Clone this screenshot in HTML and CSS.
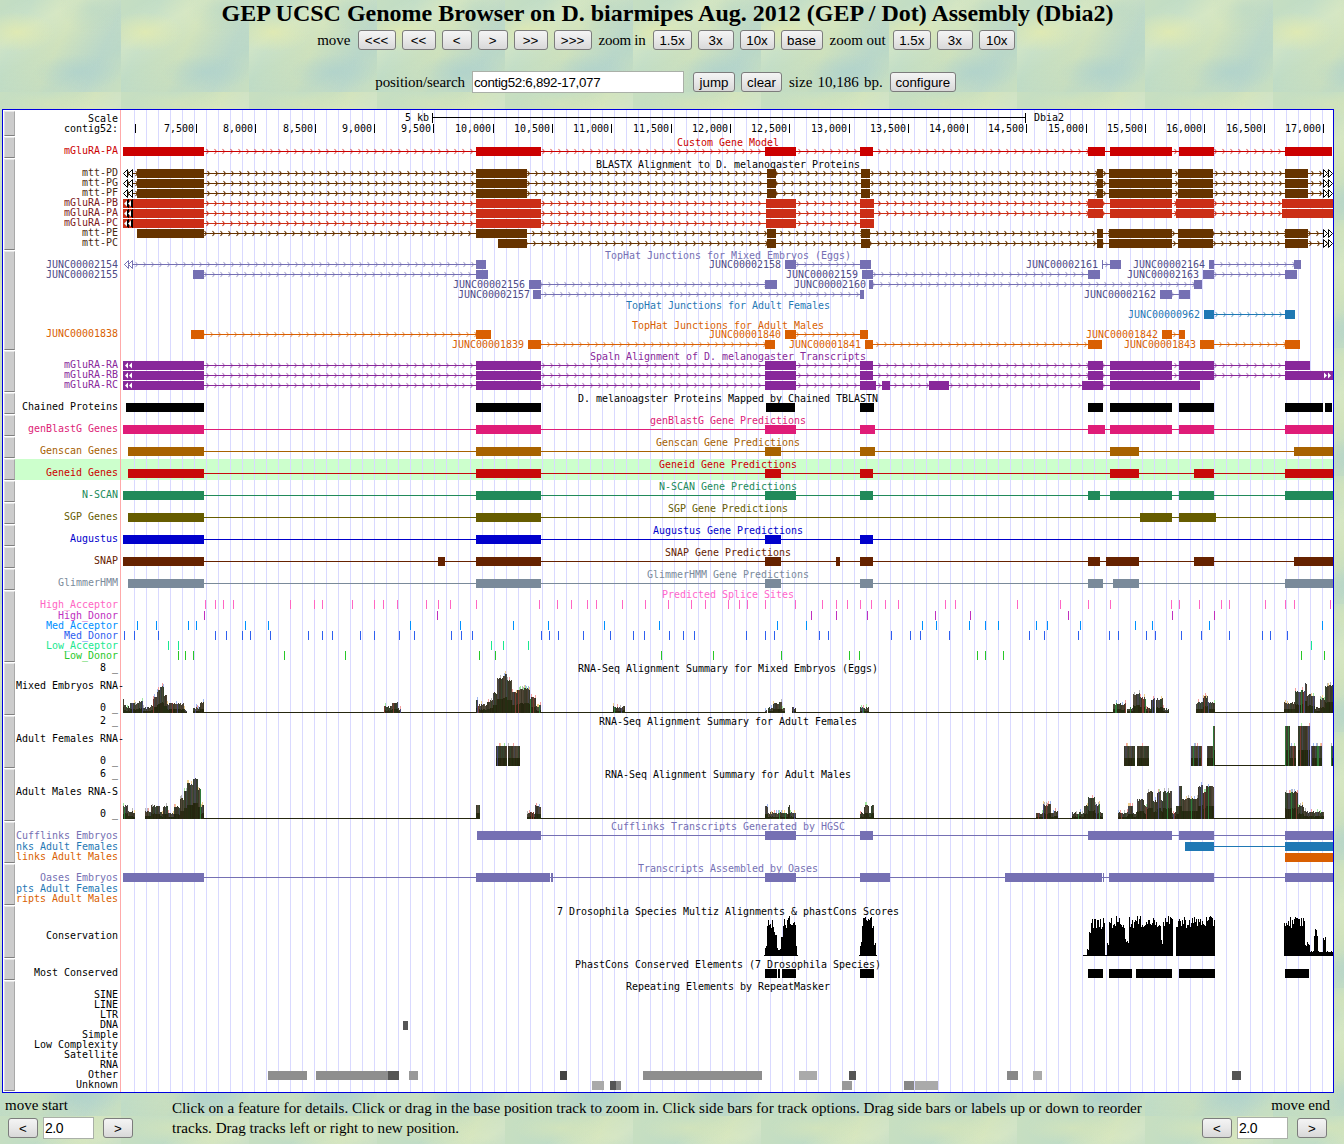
FILE: index.html
```html
<!DOCTYPE html>
<html lang="en">
<head>
<meta charset="utf-8">
<title>GEP UCSC Genome Browser</title>
<link rel="stylesheet" href="styles.css">
</head>
<body>
<div class="page">
  <h1 class="title">GEP UCSC Genome Browser on D. biarmipes Aug. 2012 (GEP / Dot) Assembly (Dbia2)</h1>
  <div class="nav nav-move">
    <span class="word">move</span>
    <button class="btn w38">&lt;&lt;&lt;</button>
    <button class="btn w34">&lt;&lt;</button>
    <button class="btn w30">&lt;</button>
    <button class="btn w30">&gt;</button>
    <button class="btn w34">&gt;&gt;</button>
    <button class="btn w38">&gt;&gt;&gt;</button>
    <span class="word word-tight">zoom in</span>
    <button class="btn w39">1.5x</button>
    <button class="btn w36">3x</button>
    <button class="btn w35">10x</button>
    <button class="btn w42">base</button>
    <span class="word">zoom out</span>
    <button class="btn w38">1.5x</button>
    <button class="btn w36">3x</button>
    <button class="btn w36">10x</button>
  </div>
  <div class="nav nav-pos">
    <span class="word word-pos">position/search</span>
    <input class="field field-pos" value="contig52:6,892-17,077">
    <button class="btn w42 after-field">jump</button>
    <button class="btn w41">clear</button>
    <span class="word word-size">size 10,186 bp.</span>
    <button class="btn w66">configure</button>
  </div>
  <div class="browser">
    <div class="sidebars" id="sidebars"></div>
    <svg class="tracks" id="tracks" width="1318" height="982" viewBox="15 110 1318 982" xmlns="http://www.w3.org/2000/svg"></svg>
  </div>
  <div class="foot">
    <div class="mover">
      <div class="mover-label">move start</div>
      <div class="mover-row">
        <button class="btn w30">&lt;</button>
        <input class="field field-num" value="2.0">
        <button class="btn w30 after-num">&gt;</button>
      </div>
    </div>
    <p class="help">Click on a feature for details. Click or drag in the base position track to zoom in. Click side bars for track options. Drag side bars or labels up or down to reorder tracks. Drag tracks left or right to new position.</p>
    <div class="mover mover-end">
      <div class="mover-label">move end</div>
      <div class="mover-row">
        <button class="btn w30">&lt;</button>
        <input class="field field-num" value="2.0">
        <button class="btn w30 after-num">&gt;</button>
      </div>
    </div>
  </div>
</div>
<script src="script.js"></script>
</body>
</html>
```
FILE: styles.css
```css
html, body { margin: 0; padding: 0; height: 1144px; overflow: hidden; }
body {
  background-color: #c6dfc0;
  background-image:
    radial-gradient(ellipse 38px 20px at 24px 68px, rgba(232,236,168,.65), rgba(232,236,168,0)),
    radial-gradient(ellipse 44px 18px at 85px 108px, rgba(172,208,205,.6), rgba(172,208,205,0)),
    radial-gradient(ellipse 34px 24px at 100px 45px, rgba(182,214,198,.55), rgba(182,214,198,0)),
    radial-gradient(ellipse 46px 16px at 55px 12px, rgba(222,232,180,.55), rgba(222,232,180,0)),
    linear-gradient(150deg, rgba(255,255,210,0) 25%, rgba(255,255,210,.22) 42%, rgba(255,255,210,0) 58%, rgba(165,205,205,.28) 78%, rgba(165,205,205,0) 95%),
    linear-gradient(115deg, #c8dfc0, #c0dcc6 30%, #d0e2bc 55%, #c0dac8 80%, #c8dfc0);
  background-size: 128px 128px;
  background-position: -7px -36px;
  font-family: "Liberation Serif", "Times New Roman", serif;
  font-size: 15px;
  color: #000;
}
.page { width: 1335px; }
.title {
  margin: 0;
  height: 27px;
  line-height: 27px;
  font-size: 24px;
  font-weight: bold;
  text-align: center;
}
.nav { display: flex; justify-content: center; align-items: center; gap: 6px; }
.nav-move { margin: 3px 0 0 -4px; height: 20px; }
.nav-pos { margin: 21px 0 0 -5px; height: 22px; }
.word { margin: 0 1px; white-space: nowrap; }
.word-tight { letter-spacing: -.25px; }
.word-pos { letter-spacing: -.07px; }
.word-size { word-spacing: 1.5px; }
.btn {
  box-sizing: border-box;
  height: 20px;
  padding: 0;
  border: 1px solid #7c7c7c;
  border-radius: 3px;
  background: linear-gradient(#f4f4f4, #e8e8e8 50%, #d8d8d8);
  font-family: "Liberation Sans", Arial, sans-serif;
  font-size: 13.33px;
  color: #000;
}
.w30 { width: 30px; }
.w34 { width: 34px; }
.w35 { width: 35px; }
.w36 { width: 36px; }
.w38 { width: 38px; }
.w39 { width: 39px; }
.w41 { width: 41px; }
.w42 { width: 42px; }
.w66 { width: 66px; }
.after-field { margin-left: 3px; }
.field {
  box-sizing: border-box;
  height: 22px;
  border: 1px solid #aab0a8;
  background: #fff;
  padding: 0 1px;
  font-family: "Liberation Sans", Arial, sans-serif;
  font-size: 13.33px;
  letter-spacing: -.3px;
  color: #000;
}
.field-pos { width: 212px; }
.field-num { width: 51px; font-size: 14px; letter-spacing: -.5px; }
.browser {
  box-sizing: border-box;
  display: flex;
  margin: 16px 0 0 2px;
  width: 1332px;
  height: 984px;
  border: 1px solid #0000e0;
  background: #fff;
}
.sidebars {
  box-sizing: border-box;
  display: flex;
  flex-direction: column;
  gap: 1px;
  width: 12px;
  padding: 1px 0 0 1px;
}
.sidebar {
  box-sizing: border-box;
  width: 11px;
  background: #cccccc;
  border-top: 1px solid #e8e8e8;
  border-left: 1px solid #e0e0e0;
  border-bottom: 1px solid #7f7f7f;
  border-right: 1px solid #a8a8a8;
}
.tracks { display: block; flex: none; }
.tracks text {
  font-family: "DejaVu Sans Mono", "Liberation Mono", monospace;
  font-size: 9.97px;
}
.foot { display: flex; height: 51px; }
.mover { box-sizing: border-box; width: 172px; padding: 2px 0 0 5px; }
.mover-label { height: 20px; line-height: 20px; }
.mover-row { display: flex; align-items: center; gap: 5px; margin-top: 2px; padding-left: 3px; }
.after-num { margin-left: 4px; }
.help {
  margin: 5px 0 0;
  width: 1000px;
  padding-right: 22px;
  box-sizing: border-box;
  font-size: 15.12px;
  line-height: 20px;
}
.mover-end { width: 165px; padding: 2px 0 0 0; margin-left: -7px; }
.mover-end .mover-label { text-align: right; }
.mover-end .mover-row { padding-left: 37px; }
```
FILE: script.js
```js
(function () {
  var out = [];
  var seed = 12345;
  function rnd() { seed = (seed * 1103515245 + 12345) & 0x7fffffff; return seed / 0x7fffffff; }
  function rect(x1, x2, y, h, c) {
    out.push('<rect x="' + x1 + '" y="' + y + '" width="' + (x2 - x1) + '" height="' + h + '" fill="' + c + '"/>');
  }
  function esc(s) { return s.replace(/&/g, '&amp;').replace(/</g, '&lt;'); }
  function text(s, x, yc, c, anchor, extra) {
    out.push('<text x="' + x + '" y="' + (yc + 4) + '" fill="' + c + '" text-anchor="' + (anchor || 'end') + '"' + (extra || '') + '>' + esc(s) + '</text>');
  }
  var HEAVY = { '#663300': 1, '#cb2e16': 1 };
  function intron(x1, x2, top, c) {
    rect(x1, x2, top + 4, 1, c);
    var d = '';
    for (var x = x1 + 3; x < x2 - 2; x += 8) { d += 'M' + (x + .5) + ' ' + (top + 2) + 'l2 2.5l-2 2.5'; }
    out.push('<path d="' + d + '" fill="none" stroke="' + c + '" stroke-width="1.1" opacity="' + (HEAVY[c] ? 1 : .6) + '"/>');
  }
  function blocks(list, top, c) { list.forEach(function (b) { rect(b[0], b[1], top, 9, c); }); }
  function gene(list, top, c, from, to) {
    var a = from === undefined ? list[0][0] : from;
    var b = to === undefined ? list[list.length - 1][1] : to;
    intron(a, b, top, c);
    blocks(list, top, c);
  }
  function solid(list, top, c, from, to) {
    var a = from === undefined ? list[0][0] : from;
    var b = to === undefined ? 1333 : to;
    rect(a, b, top + 4, 1, c);
    blocks(list, top, c);
  }
  function tri(x, top, dir, fill, stroke) {
    var d = dir < 0
      ? 'M' + (x + 4.5) + ' ' + (top + .5) + 'L' + (x + .5) + ' ' + (top + 4.5) + 'L' + (x + 4.5) + ' ' + (top + 8.5) + 'Z'
      : 'M' + (x + .5) + ' ' + (top + .5) + 'L' + (x + 4.5) + ' ' + (top + 4.5) + 'L' + (x + .5) + ' ' + (top + 8.5) + 'Z';
    out.push('<path d="' + d + '" fill="' + fill + '" stroke="' + stroke + '"/>');
  }
  function whiteArrows(x, top, dir) {
    [0, 4].forEach(function (o) {
      var d = dir < 0
        ? 'M' + (x + o + 3) + ' ' + (top + 1.5) + 'L' + (x + o) + ' ' + (top + 4.5) + 'L' + (x + o + 3) + ' ' + (top + 7.5) + 'Z'
        : 'M' + (x + o) + ' ' + (top + 1.5) + 'L' + (x + o + 3) + ' ' + (top + 4.5) + 'L' + (x + o) + ' ' + (top + 7.5) + 'Z';
      out.push('<path d="' + d + '" fill="#fff"/>');
    });
  }

  /* sidebars */
  var bars = [25, 21, 91, 99, 41, 21, 21, 21, 21, 21, 21, 21, 21, 21, 71, 52, 52, 52, 41, 41, 52, 21, 110];
  var sb = document.getElementById('sidebars');
  bars.forEach(function (h) {
    var d = document.createElement('div');
    d.className = 'sidebar';
    d.style.height = h + 'px';
    sb.appendChild(d);
  });

  /* highlight, guides, margin line */
  rect(15, 1333, 459, 21, '#ccffcc');
  for (var gx = 134; gx < 1333; gx += 12) { rect(gx, gx + 1, 110, 982, '#d9d9ff'); }
  rect(120, 121, 110, 982, '#ffaaaa');

  /* ruler */
  text('5 kb', 429, 117, '#000');
  rect(432, 1025, 117, 1, '#000');
  rect(432, 433, 113, 10, '#000');
  rect(1025, 1026, 113, 10, '#000');
  text('Dbia2', 1034, 117, '#000', 'start');
  rect(135, 136, 124, 9, '#000');
  for (var i = 0; i < 20; i++) {
    var n = 7500 + i * 500;
    var tx = Math.round(196 + i * 59.32);
    rect(tx, tx + 1, 124, 9, '#000');
    text(n.toString().replace(/(\d)(\d{3})$/, '$1,$2'), tx - 2, 128, '#000');
  }

  /* track titles */
  var PUR = '#7570b3', BLU = '#1f78b4', ORA = '#d95f02', VIO = '#88289a';
  [['Custom Gene Model', 142, '#cc0000'],
   ['BLASTX Alignment to D. melanogaster Proteins', 164, '#000'],
   ['TopHat Junctions for Mixed Embryos (Eggs)', 255, PUR],
   ['TopHat Junctions for Adult Females', 305, BLU],
   ['TopHat Junctions for Adult Males', 325, ORA],
   ['Spaln Alignment of D. melanogaster Transcripts', 356, VIO],
   ['D. melanoagster Proteins Mapped by Chained TBLASTN', 398, '#000'],
   ['genBlastG Gene Predictions', 420, '#dd1c77'],
   ['Genscan Gene Predictions', 442, '#a66000'],
   ['Geneid Gene Predictions', 464, '#cc0000'],
   ['N-SCAN Gene Predictions', 486, '#218a5a'],
   ['SGP Gene Predictions', 508, '#665c00'],
   ['Augustus Gene Predictions', 530, '#0000cc'],
   ['SNAP Gene Predictions', 552, '#662200'],
   ['GlimmerHMM Gene Predictions', 574, '#7a8a9a'],
   ['Predicted Splice Sites', 594, '#ff66cc'],
   ['RNA-Seq Alignment Summary for Mixed Embryos (Eggs)', 668, '#000'],
   ['RNA-Seq Alignment Summary for Adult Females', 721, '#000'],
   ['RNA-Seq Alignment Summary for Adult Males', 774, '#000'],
   ['Cufflinks Transcripts Generated by HGSC', 826, PUR],
   ['Transcripts Assembled by Oases', 868, PUR],
   ['7 Drosophila Species Multiz Alignments & phastCons Scores', 911, '#000'],
   ['PhastCons Conserved Elements (7 Drosophila Species)', 964, '#000'],
   ['Repeating Elements by RepeatMasker', 986, '#000']
  ].forEach(function (t) { text(t[0], 728, t[1], t[2], 'middle'); });

  /* custom gene */
  gene([[123,204],[476,541],[765,796],[860,873],[1088,1105],[1110,1172],[1179,1214],[1285,1332]], 147, '#cc0000');

  /* blastx */
  var BR = '#663300', RD = '#cb2e16';
  var mtt = [[476,527],[767,776],[861,870],[1097,1103],[1109,1172],[1178,1213],[1285,1308]];
  var mtt1 = [[137,204]].concat(mtt);
  var glu = [[123,204],[476,541],[766,796],[860,874],[1088,1103],[1110,1172],[1176,1214],[1282,1333]];
  [169, 179, 189].forEach(function (y) {
    gene(mtt1, y, BR, 124, 1332);
    tri(123, y, -1, '#fff', '#000'); tri(128, y, -1, '#fff', '#000');
    tri(1323, y, 1, '#fff', '#000'); tri(1328, y, 1, '#fff', '#000');
  });
  [199, 209].forEach(function (y) {
    gene(glu, y, RD);
    tri(124, y, -1, '#000', '#000'); tri(128, y, -1, '#000', '#000');
    whiteArrows(124, y, -1);
  });
  gene(glu.slice(0, 4), 219, RD);
  tri(124, 219, -1, '#000', '#000'); tri(128, 219, -1, '#000', '#000');
  whiteArrows(124, 219, -1);
  gene(mtt1, 229, BR, 137, 1332);
  tri(1323, 229, 1, '#fff', '#000'); tri(1328, 229, 1, '#fff', '#000');
  gene([[498,527]].concat(mtt.slice(1)), 239, BR, 498, 1332);
  tri(1323, 239, 1, '#fff', '#000'); tri(1328, 239, 1, '#fff', '#000');

  /* junctions */
  var JL = '#4f4b86';
  gene([[476,486]], 260, PUR, 124);
  tri(124, 260, -1, '#fff', PUR); tri(128, 260, -1, '#fff', PUR);
  text('JUNC00002158', 781, 264, JL);
  gene([[785,796],[860,871]], 260, PUR);
  text('JUNC00002161', 1098, 264, JL);
  rect(1102, 1103, 260, 9, PUR);
  gene([[1110,1121]], 260, PUR, 1102);
  text('JUNC00002164', 1205, 264, JL);
  gene([[1209,1214],[1294,1301]], 260, PUR);
  gene([[193,204],[476,488]], 270, PUR);
  text('JUNC00002159', 858, 274, JL);
  gene([[862,873],[1088,1100]], 270, PUR);
  text('JUNC00002163', 1199, 274, JL);
  gene([[1203,1214],[1285,1297]], 270, PUR);
  text('JUNC00002156', 525, 284, JL);
  gene([[529,541],[765,777]], 280, PUR);
  text('JUNC00002160', 866, 284, JL);
  gene([[869,873],[1194,1202]], 280, PUR);
  text('JUNC00002157', 530, 294, JL);
  gene([[533,541],[860,864]], 290, PUR);
  text('JUNC00002162', 1156, 294, JL);
  gene([[1160,1172],[1179,1190]], 290, PUR);
  text('JUNC00000962', 1200, 314, BLU);
  gene([[1204,1214],[1285,1295]], 310, BLU);
  gene([[191,204],[476,491]], 330, ORA);
  text('JUNC00001840', 781, 334, ORA);
  gene([[785,796],[860,868]], 330, ORA);
  text('JUNC00001842', 1158, 334, ORA);
  gene([[1162,1172],[1179,1185]], 330, ORA);
  text('JUNC00001839', 524, 344, ORA);
  gene([[528,541],[765,775]], 340, ORA);
  text('JUNC00001841', 861, 344, ORA);
  gene([[865,873],[1088,1102]], 340, ORA);
  text('JUNC00001843', 1196, 344, ORA);
  gene([[1200,1214],[1285,1300]], 340, ORA);

  /* spaln */
  var sp = [[123,204],[476,541],[765,796],[860,873],[1088,1103],[1110,1172],[1179,1214]];
  gene(sp.concat([[1285,1310]]), 361, VIO); whiteArrows(125, 361, -1);
  gene(sp.concat([[1285,1333]]), 371, VIO); whiteArrows(125, 371, -1); whiteArrows(1324, 371, 1);
  gene([[123,204],[476,541],[765,796],[860,876],[882,890],[929,949],[1082,1103],[1110,1200]], 381, VIO); whiteArrows(125, 381, -1);

  /* chained */
  blocks([[126,204],[476,541],[766,795],[860,874],[1088,1103],[1110,1172],[1179,1214],[1285,1323],[1325,1332]], 403, '#000');

  /* gene predictions */
  solid([[123,204],[476,541],[765,796],[860,875],[1088,1105],[1110,1172],[1179,1214],[1285,1333]], 425, '#df1c78');
  solid([[128,204],[476,541],[765,781],[860,875],[1110,1139],[1294,1333]], 447, '#a86200');
  solid([[128,204],[476,541],[765,781],[860,873],[1110,1139],[1194,1214],[1285,1333]], 469, '#c80a0a');
  solid([[123,204],[476,541],[765,796],[860,873],[1088,1100],[1110,1172],[1179,1214],[1285,1333]], 491, '#218a5a');
  solid([[128,204],[476,541],[1140,1172],[1179,1216]], 513, '#665c00');
  solid([[123,204],[476,541],[765,781],[860,873]], 535, '#0000cc');
  solid([[123,204],[438,445],[476,541],[765,781],[836,840],[860,873],[1088,1100],[1106,1139],[1194,1214],[1294,1333]], 557, '#662200');
  solid([[128,204],[476,541],[765,781],[860,873],[1088,1103],[1113,1139],[1285,1333]], 579, '#7a8a9a');

  /* splice sites */
  function ticks(list, top, c) { list.forEach(function (x) { rect(x, x + 1, top, 9, c); }); }
  ticks([205,215,223,233,290,314,322,352,374,383,397,426,438,450,476,539,557,571,587,596,622,645,668,691,705,728,739,747,765,795,822,836,847,860,871,885,898,945,955,1017,1060,1088,1110,1171,1179,1199,1221,1229,1265,1285,1294,1330], 600, '#ff66c4');
  ticks([204,437,811,836,867,935,970,1068,1172,1214], 611, '#c030c0');
  ticks([137,156,188,196,245,268,410,460,513,548,604,659,777,806,922,936,969,985,998,1036,1047,1080,1135,1152,1209,1322], 621, '#0090ff');
  ticks([124,134,158,215,226,242,250,270,308,322,332,360,374,399,414,451,461,472,541,549,558,583,610,633,644,669,683,694,746,765,774,819,828,891,910,920,949,1029,1044,1078,1109,1118,1146,1155,1181,1201,1229,1262,1270,1287], 631, '#2f60f0');
  ticks([168,178,491,503,528,1311], 641, '#19e890');
  ticks([178,185,193,284,345,479,495,661,713,781,849,859,977,985,1003,1301,1324], 651, '#28c828');

  /* wiggles */
  var dark = ['#3a3b2a', '#4a3f30', '#34452e', '#504838', '#45454a', '#3c3626'];
  var low = ['#25260f', '#2c2a14', '#252e12'];
  var tips = ['#f4a0a0', '#a0e8a0', '#a0b8f0', '#f0d090', '#b8b8b8'];
  var streaks = ['#7a3a30', '#2f7a3a', '#4a4a78'];
  function wig(base, line, segs, jitter) {
    line.forEach(function (l) { rect(l[0], l[1], base, 1, '#25260f'); });
    segs.forEach(function (s) {
      for (var x = s[0]; x < s[1]; x++) {
        var h = Math.max(1, s[2] + Math.round((rnd() - .5) * jitter));
        rect(x, x + 1, base - h + 1, h, dark[Math.floor(rnd() * dark.length)]);
        var lh = Math.round(h * .4);
        rect(x, x + 1, base - lh + 1, lh, low[Math.floor(rnd() * low.length)]);
        if (rnd() < .1) { rect(x, x + 1, base - h + 1, h, streaks[Math.floor(rnd() * streaks.length)]); }
        if (rnd() < .3) { rect(x, x + 1, base - h - 2, 3, tips[Math.floor(rnd() * tips.length)]); }
      }
    });
  }
  wig(712, [[204,476],[541,765],[796,860],[869,1113],[1215,1285]], [
    [123,124,14],[124,127,7],[127,130,6],[130,137,9],[137,143,11],[143,150,5],[150,153,7],[153,157,15],[157,160,22],[160,164,26],[164,167,17],[167,172,9],[172,178,9],[178,184,9],[184,187,3],
    [193,200,5],[200,204,11],[384,392,6],[392,398,11],[398,401,4],
    [476,478,13],[478,487,8],[487,493,12],[493,497,20],[497,503,34],[503,507,38],[507,512,33],[512,517,20],[517,522,24],[522,530,24],[530,536,15],[536,541,7],
    [613,625,6],[765,767,3],[768,773,5],[773,782,10],[782,785,4],[792,796,5],[860,869,5],
    [1113,1126,9],[1127,1133,5],[1133,1140,19],[1140,1146,15],[1146,1151,5],[1151,1155,14],[1156,1163,14],[1163,1169,4],
    [1196,1203,10],[1203,1208,16],[1208,1215,10],
    [1284,1295,10],[1295,1305,22],[1305,1307,30],[1307,1315,18],[1315,1320,5],[1320,1325,14],[1325,1333,27]
  ], 3);
  wig(765, [[1215,1285]], [
    [496,507,20],[508,520,20],[1124,1135,20],[1137,1149,20],[1191,1202,20],[1207,1213,20],[1213,1215,40],
    [1285,1290,40],[1290,1296,20],[1298,1310,40],[1311,1322,20],[1331,1333,20]
  ], 0);
  wig(818, [[204,476],[541,765],[796,860],[874,1036],[1058,1072],[1214,1285]], [
    [123,128,13],[128,135,7],[145,151,7],[151,160,13],[160,163,6],[163,168,12],[168,174,6],[174,180,12],[180,184,20],[184,187,28],[187,193,35],[193,198,40],[198,201,30],[201,204,13],
    [476,480,14],[527,535,6],[535,541,13],[765,768,13],[768,788,6],[788,790,13],[790,796,6],[860,864,6],[864,869,13],[869,871,6],[871,874,13],
    [1036,1043,6],[1043,1051,14],[1051,1058,7],[1072,1084,6],[1084,1088,14],[1088,1095,21],[1095,1100,14],[1100,1103,6],
    [1118,1128,6],[1128,1133,13],[1133,1137,6],[1137,1144,19],[1144,1147,13],[1147,1153,27],[1153,1157,18],[1157,1161,27],[1161,1163,18],[1163,1172,27],[1172,1176,6],[1176,1179,13],[1179,1182,33],[1182,1187,20],[1187,1192,20],[1192,1198,21],[1198,1203,33],[1203,1206,27],[1206,1210,33],[1210,1214,33],
    [1285,1298,27],[1298,1304,13],[1304,1324,7]
  ], 2);

  /* cufflinks, oases */
  var cf = [[477,541],[765,796],[860,873],[1088,1172],[1179,1214],[1285,1333]];
  solid(cf, 831, PUR);
  solid([[1185,1214],[1285,1333]], 842, BLU);
  blocks([[1285,1333]], 853, ORA);
  solid([[123,204],[476,550],[551,553],[765,796],[860,890],[1005,1102],[1103,1104],[1109,1214],[1285,1333]], 873, PUR);

  /* conservation */
  function cons(x1, x2, fn) {
    for (var x = x1; x < x2; x++) {
      var h = Math.round(fn(x) * (.7 + rnd() * .3));
      rect(x, x + 1, 956 - h, h, '#000');
    }
  }
  rect(764, 798, 955, 1, '#000'); rect(859, 877, 955, 1, '#000'); rect(1083, 1173, 955, 1, '#000'); rect(1176, 1215, 955, 1, '#000'); rect(1284, 1333, 955, 1, '#000');
  cons(765, 797, function (x) { return (x < 767 || x > 795) ? 12 : (x > 776 && x < 781) ? 8 : (x > 773 && x < 783) ? 26 : 40; });
  cons(860, 876, function (x) { return (x < 862 || x > 873) ? 14 : 40; });
  cons(1087, 1105, function (x) { return x < 1089 ? 8 : x < 1091 ? 26 : 38; });
  cons(1107, 1173, function (x) { return x < 1109 ? 14 : (x > 1124 && x < 1129) ? 18 : (x > 1160 && x < 1163) ? 16 : 40; });
  cons(1176, 1215, function () { return 40; });
  cons(1284, 1333, function (x) { return x < 1305 ? 40 : x < 1310 ? 14 : (x > 1313 && x < 1318) ? 28 : (x > 1322 && x < 1326) ? 20 : 5; });

  /* most conserved */
  blocks([[765,777],[778,780],[782,796],[860,874],[1088,1103],[1109,1132],[1136,1172],[1179,1215],[1285,1309]], 969, '#000');

  /* repeats */
  rect(403, 408, 1021, 9, '#555');
  [[268,307,'#8e8e8e'],[316,388,'#8e8e8e'],[388,399,'#555'],[409,418,'#999'],[560,567,'#444'],[643,762,'#8e8e8e'],[799,817,'#aaa'],[849,856,'#555'],[1007,1018,'#888'],[1033,1042,'#aaa'],[1232,1241,'#555']]
    .forEach(function (b) { rect(b[0], b[1], 1071, 9, b[2]); });
  [[592,604,'#aaa'],[610,616,'#555'],[616,621,'#888'],[842,852,'#999'],[904,914,'#888'],[915,938,'#aaa']]
    .forEach(function (b) { rect(b[0], b[1], 1081, 9, b[2]); });

  /* left labels */
  var MR = '#7c1818', MB = '#4a2a10';
  [['Scale',118,'#000'],['contig52:',128,'#000'],['mGluRA-PA',150,'#cc0000'],
   ['mtt-PD',172,MB],['mtt-PG',182,MB],['mtt-PF',192,MB],['mGluRA-PB',202,MR],['mGluRA-PA',212,MR],['mGluRA-PC',222,MR],['mtt-PE',232,MB],['mtt-PC',242,MB],
   ['JUNC00002154',264,JL],['JUNC00002155',274,JL],['JUNC00001838',333,ORA],
   ['mGluRA-RA',364,VIO],['mGluRA-RB',374,VIO],['mGluRA-RC',384,VIO],
   ['Chained Proteins',406,'#000'],['genBlastG Genes',428,'#dd1c77'],['Genscan Genes',450,'#a66000'],['Geneid Genes',472,'#cc0000'],
   ['N-SCAN',494,'#218a5a'],['SGP Genes',516,'#665c00'],['Augustus',538,'#0000cc'],['SNAP',560,'#662200'],['GlimmerHMM',582,'#7a8a9a'],
   ['High_Acceptor',604,'#ff66c4'],['High_Donor',615,'#c030c0'],['Med_Acceptor',625,'#0090ff'],['Med_Donor',635,'#2f60f0'],['Low_Acceptor',645,'#19e890'],['Low_Donor',655,'#28c828'],
   ['8 _',667,'#000'],['0 _',707,'#000'],['2 _',720,'#000'],['0 _',760,'#000'],['6 _',773,'#000'],['0 _',813,'#000'],
   ['Cufflinks Embryos',835,PUR],['nks Adult Females',846,BLU],['links Adult Males',856,ORA],
   ['Oases Embryos',877,PUR],['pts Adult Females',888,BLU],['ripts Adult Males',898,ORA],
   ['Conservation',935,'#000'],['Most Conserved',972,'#000'],
   ['SINE',994,'#000'],['LINE',1004,'#000'],['LTR',1014,'#000'],['DNA',1024,'#000'],['Simple',1034,'#000'],['Low Complexity',1044,'#000'],['Satellite',1054,'#000'],['RNA',1064,'#000'],['Other',1074,'#000'],['Unknown',1084,'#000']
  ].forEach(function (l) { text(l[0], 118, l[1], l[2]); });
  [['Mixed Embryos RNA-',685],['Adult Females RNA-',738],['Adult Males RNA-S',791]]
    .forEach(function (l) { text(l[0], 16, l[1], '#000', 'start'); });

  document.getElementById('tracks').innerHTML = out.join('');
})();
```
